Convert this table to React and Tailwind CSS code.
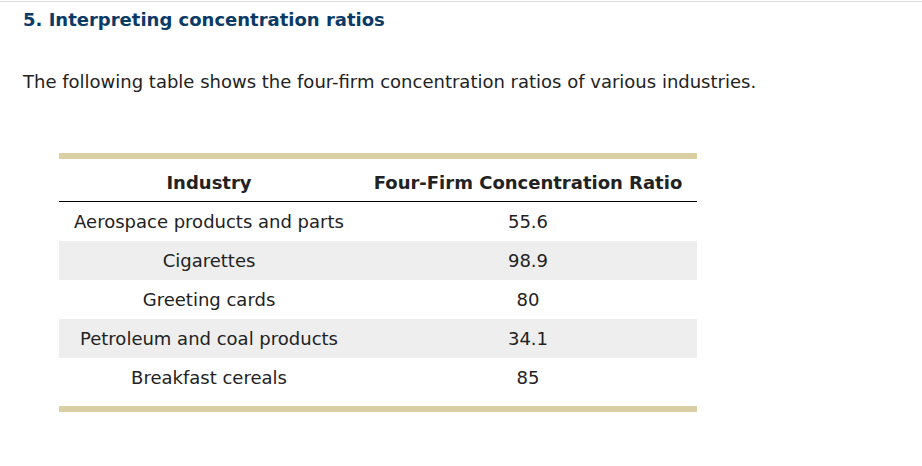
import React from "react";

const rows = [
  { industry: "Aerospace products and parts", ratio: "55.6" },
  { industry: "Cigarettes", ratio: "98.9" },
  { industry: "Greeting cards", ratio: "80" },
  { industry: "Petroleum and coal products", ratio: "34.1" },
  { industry: "Breakfast cereals", ratio: "85" },
];

function App() {
  return (
    <div className="min-h-[466px] w-[922px] bg-white font-['Verdana','DejaVu_Sans',sans-serif] text-[#1a1a1a]">
      <div className="h-px mt-px bg-[#dcdcdc]" />
      <div className="px-[23px]">
        <h2 className="pt-[6px] text-[18px] leading-[24px] font-bold text-[#0b3a67]">
          5. Interpreting concentration ratios
        </h2>
        <p className="mt-[38px] text-[18px] leading-[24px] text-[#222]">
          The following table shows the four-firm concentration ratios of various industries.
        </p>
      </div>

      <div className="ml-[59px] mt-[59px] w-[638px]">
        <div className="h-[6px] bg-[#d9cfa3]" />
        <table className="w-full border-collapse text-[18px] leading-[22px] text-[#222]">
          <thead>
            <tr className="border-b border-black">
              <th className="w-[300px] pt-[13px] pb-[7px] text-center font-bold">Industry</th>
              <th className="pt-[13px] pb-[7px] text-center font-bold">Four-Firm Concentration Ratio</th>
            </tr>
          </thead>
          <tbody>
            {rows.map((r, i) => (
              <tr key={r.industry} className={i % 2 === 1 ? "bg-[#eeeeee]" : ""}>
                <td className="h-[39px] pt-px text-center align-middle">{r.industry}</td>
                <td className="h-[39px] pt-px text-center align-middle">{r.ratio}</td>
              </tr>
            ))}
          </tbody>
        </table>
        <div className="mt-[9px] h-[6px] bg-[#d9cfa3]" />
      </div>
    </div>
  );
}

export default App;
